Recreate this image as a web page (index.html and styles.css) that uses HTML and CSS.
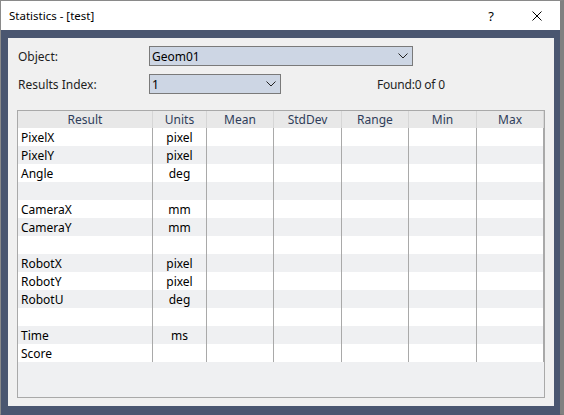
FILE: index.html
```html
<!DOCTYPE html>
<html lang="en">
<head>
<meta charset="utf-8">
<title>Statistics - [test]</title>
<link rel="stylesheet" href="styles.css">
</head>
<body>
<div class="window">
  <div class="titlebar">
    <span class="title">Statistics - [test]</span>
    <span class="cap-btn help">?</span>
    <span class="cap-btn close">
      <svg width="10" height="10" viewBox="0 0 10 10"><path d="M0.5 0.5 L9.5 9.5 M9.5 0.5 L0.5 9.5" stroke="#000" stroke-width="1" fill="none"/></svg>
    </span>
  </div>
  <div class="frame">
    <div class="panel">
      <div class="form-row">
        <span class="lbl">Object:</span>
        <div class="combo combo-wide">
          <span class="combo-text">Geom01</span>
          <svg class="chev" width="10" height="6" viewBox="0 0 10 6"><path d="M0.5 0.5 L5 5 L9.5 0.5" stroke="#222" stroke-width="1" fill="none"/></svg>
        </div>
      </div>
      <div class="form-row row2">
        <span class="lbl">Results Index:</span>
        <div class="combo combo-narrow">
          <span class="combo-text">1</span>
          <svg class="chev" width="10" height="6" viewBox="0 0 10 6"><path d="M0.5 0.5 L5 5 L9.5 0.5" stroke="#222" stroke-width="1" fill="none"/></svg>
        </div>
        <span class="found">Found:0 of 0</span>
      </div>
      <div class="grid">
        <div class="grow head">
          <div class="c">Result</div><div class="c">Units</div><div class="c">Mean</div><div class="c">StdDev</div><div class="c">Range</div><div class="c">Min</div><div class="c">Max</div>
        </div>
        <div class="grow"><div class="c name">PixelX</div><div class="c">pixel</div><div class="c"></div><div class="c"></div><div class="c"></div><div class="c"></div><div class="c"></div></div>
        <div class="grow alt"><div class="c name">PixelY</div><div class="c">pixel</div><div class="c"></div><div class="c"></div><div class="c"></div><div class="c"></div><div class="c"></div></div>
        <div class="grow"><div class="c name">Angle</div><div class="c">deg</div><div class="c"></div><div class="c"></div><div class="c"></div><div class="c"></div><div class="c"></div></div>
        <div class="grow alt"><div class="c name"></div><div class="c"></div><div class="c"></div><div class="c"></div><div class="c"></div><div class="c"></div><div class="c"></div></div>
        <div class="grow"><div class="c name">CameraX</div><div class="c">mm</div><div class="c"></div><div class="c"></div><div class="c"></div><div class="c"></div><div class="c"></div></div>
        <div class="grow alt"><div class="c name">CameraY</div><div class="c">mm</div><div class="c"></div><div class="c"></div><div class="c"></div><div class="c"></div><div class="c"></div></div>
        <div class="grow"><div class="c name"></div><div class="c"></div><div class="c"></div><div class="c"></div><div class="c"></div><div class="c"></div><div class="c"></div></div>
        <div class="grow alt"><div class="c name">RobotX</div><div class="c">pixel</div><div class="c"></div><div class="c"></div><div class="c"></div><div class="c"></div><div class="c"></div></div>
        <div class="grow"><div class="c name">RobotY</div><div class="c">pixel</div><div class="c"></div><div class="c"></div><div class="c"></div><div class="c"></div><div class="c"></div></div>
        <div class="grow alt"><div class="c name">RobotU</div><div class="c">deg</div><div class="c"></div><div class="c"></div><div class="c"></div><div class="c"></div><div class="c"></div></div>
        <div class="grow"><div class="c name"></div><div class="c"></div><div class="c"></div><div class="c"></div><div class="c"></div><div class="c"></div><div class="c"></div></div>
        <div class="grow alt"><div class="c name">Time</div><div class="c">ms</div><div class="c"></div><div class="c"></div><div class="c"></div><div class="c"></div><div class="c"></div></div>
        <div class="grow"><div class="c name">Score</div><div class="c"></div><div class="c"></div><div class="c"></div><div class="c"></div><div class="c"></div><div class="c"></div></div>
      </div>
    </div>
  </div>
</div>
</body>
</html>
```

FILE: styles.css
```css
* { box-sizing: border-box; }
html, body { margin: 0; padding: 0; }
body {
  width: 564px;
  height: 415px;
  font-family: "Noto Sans", "Open Sans", sans-serif;
  font-size: 12px;
  color: #1a1a1a;
  background: #ffffff;
}
.window {
  width: 564px;
  height: 415px;
  border-top: 1px solid #8a8a8a;
  border-left: 1px solid #8a8a8a;
  border-bottom: 1px solid #6e6e6e;
  border-right: 4px solid #808080;
  display: flex;
  flex-direction: column;
}
.titlebar {
  height: 29px;
  flex: none;
  background: #ffffff;
  display: flex;
  align-items: center;
  padding-left: 8px;
}
.title {
  flex: 1;
  font-size: 11.5px;
  color: #000;
}
.cap-btn {
  width: 46px;
  height: 29px;
  display: flex;
  align-items: center;
  justify-content: center;
  color: #000;
}
.help { font-size: 13px; }
.frame {
  flex: 1;
  background: #4a5670;
  padding: 8px 6px 9px 7px;
  display: flex;
}
.panel {
  flex: 1;
  background: #f0f0f0;
  padding: 8px 9px 8px 9px;
  display: flex;
  flex-direction: column;
}
.form-row {
  display: flex;
  align-items: center;
  height: 20px;
  margin-bottom: 8px;
}
.form-row.row2 { margin-bottom: 16px; }
.lbl {
  width: 132px;
  padding-left: 1px;
  color: #1e1e1e;
}
.combo {
  height: 20px;
  border: 1px solid #7a7a7a;
  background: #cdd6e4;
  display: flex;
  align-items: center;
  justify-content: space-between;
  padding: 0 4px 0 2px;
}
.combo-wide { width: 264px; }
.combo-narrow { width: 132px; }
.combo-text { color: #000; }
.chev { display: block; }
.found {
  margin-left: 96px;
  color: #1e1e1e;
  letter-spacing: -0.2px;
}
.grid {
  width: 528px;
  height: 288px;
  border: 1px solid #a9a9a9;
  background: #eff0f2;
}
.grow {
  display: grid;
  grid-template-columns: 135px 54px 67px 68px 67px 68px 67px;
  height: 18px;
  background: #ffffff;
}
.grow.alt { background: #eff0f2; }
.grow.head {
  height: 17px;
  background: #e8e8e8;
}
.c {
  border-right: 1px solid #a9a9a9;
  text-align: center;
  line-height: 20px;
  white-space: nowrap;
  overflow: hidden;
  color: #000;
}
.c.name { text-align: left; padding-left: 3px; }
.head .c {
  border-right: 1px solid #d6d6d6;
  line-height: 18px;
  color: #2f3d5a;
}
```
